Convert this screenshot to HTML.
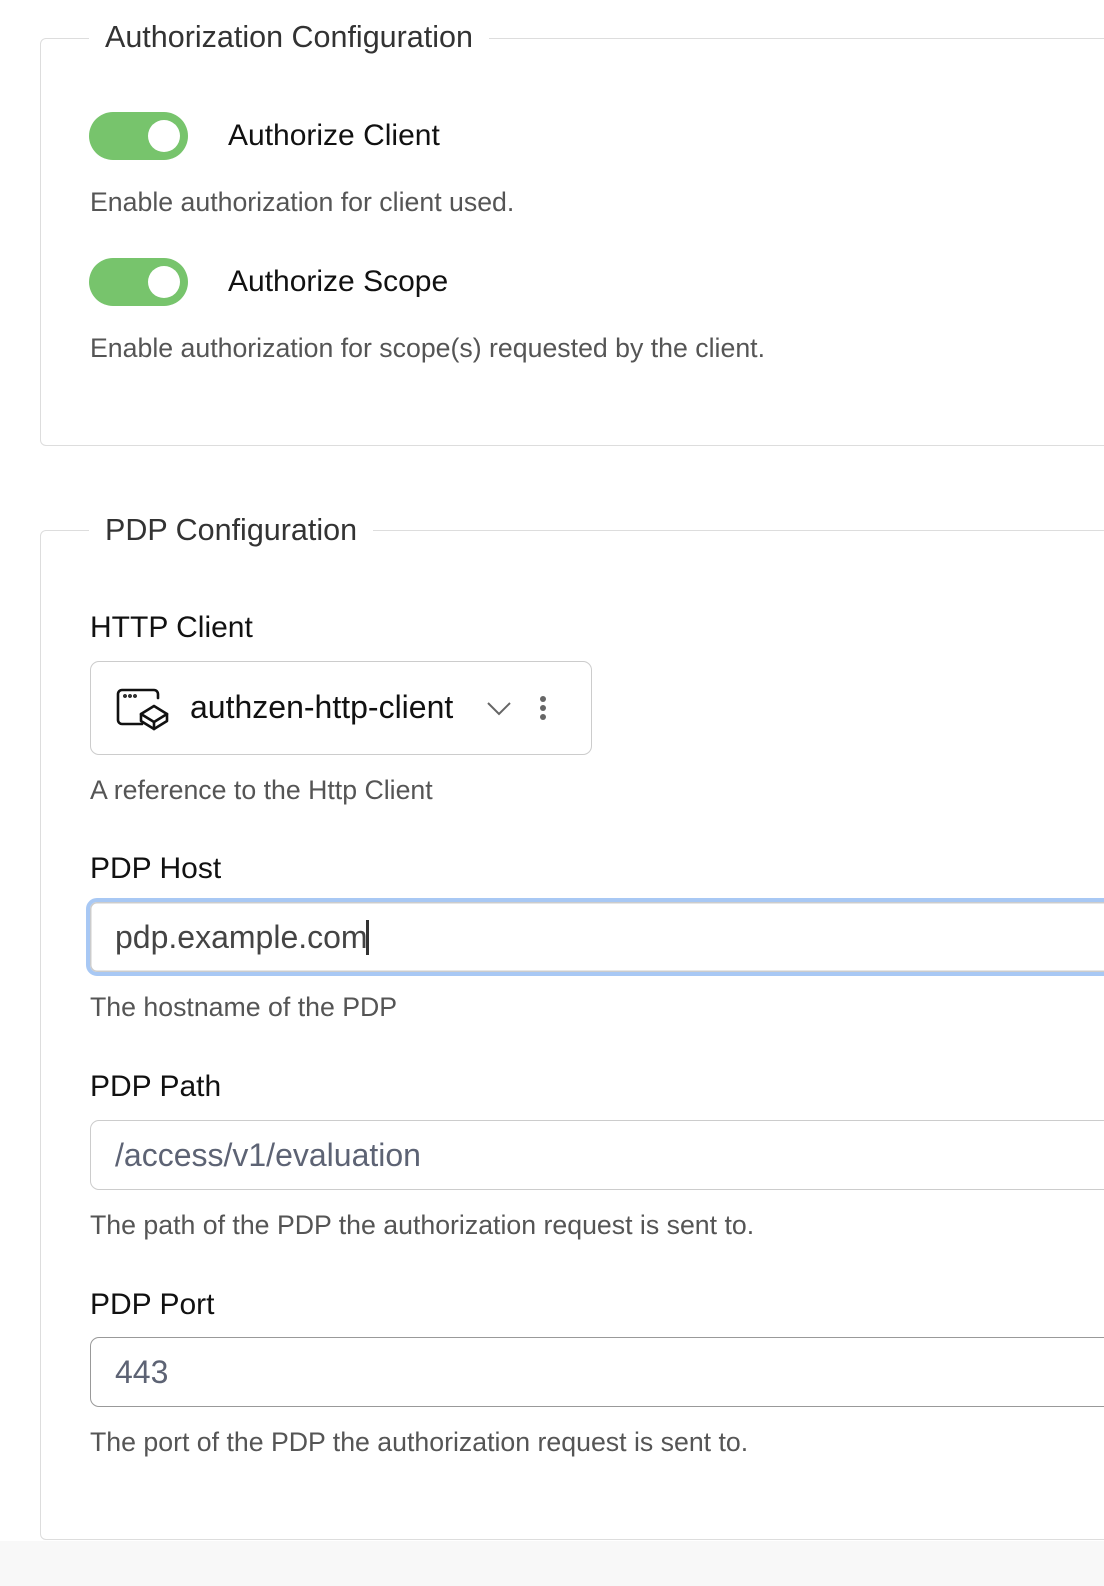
<!DOCTYPE html>
<html><head><meta charset="utf-8"><style>
body{margin:0;width:1104px;height:1586px;background:#fff;position:relative;overflow:hidden;font-family:"Liberation Sans",sans-serif;}
.t{position:absolute;white-space:nowrap;line-height:40px;}
.h{font-size:30.5px;color:#333;background:#fff;padding:0 16px;}
.l{font-size:30px;color:#111;}
.v{font-size:32px;}
.d{font-size:26.7px;color:#555;}
.fs{position:absolute;left:40px;width:1100px;border:1.5px solid #ddd;border-radius:6px;}
.tog{position:absolute;left:89px;width:99px;height:48px;border-radius:24px;background:#77c46c;}
.tog::after{content:"";position:absolute;left:59px;top:8px;width:32px;height:32px;border-radius:50%;background:#fff;}
.box{position:absolute;left:90px;width:1100px;border-radius:9px;background:#fff;box-sizing:border-box;}
</style></head><body>
<div style="position:absolute;left:0;top:1541px;width:1104px;height:45px;background:#f8f8f8"></div>
<div class="fs" style="top:38px;height:406px"></div>
<div class="t h" style="left:89px;top:17px">Authorization Configuration</div>
<div class="tog" style="top:112px"></div>
<div class="t l" style="left:228px;top:116px">Authorize Client</div>
<div class="t d" style="left:90px;top:182px">Enable authorization for client used.</div>
<div class="tog" style="top:258px"></div>
<div class="t l" style="left:228px;top:262px">Authorize Scope</div>
<div class="t d" style="left:90px;top:328px">Enable authorization for scope(s) requested by the client.</div>

<div class="fs" style="top:530px;height:1008px"></div>
<div class="t h" style="left:89px;top:510px">PDP Configuration</div>
<div class="t l" style="left:90px;top:608px">HTTP Client</div>
<div class="box" style="top:661px;width:502px;height:94px;border:1.5px solid #ccc"></div>
<svg style="position:absolute;left:116px;top:688px" width="56" height="44" viewBox="0 0 56 44" fill="none" stroke="#111" stroke-width="2.6" stroke-linecap="round" stroke-linejoin="round">
<path d="M26 36H6a4 4 0 0 1-4-4V6a4 4 0 0 1 4-4h32a4 4 0 0 1 4 4v4"/>
<circle cx="9" cy="8" r="0.6" fill="#111"/><circle cx="14" cy="8" r="0.6" fill="#111"/><circle cx="19" cy="8" r="0.6" fill="#111"/>
<path d="M25 26l13-8 13 8-13 8z"/><path d="M25 26v7l13 8 13-8v-7"/><path d="M38 34v7"/>
</svg>
<div class="t l v" style="left:190px;top:687px">authzen-http-client</div>
<svg style="position:absolute;left:486px;top:700px" width="26" height="16" viewBox="0 0 26 16"><path d="M2 3l11 11 11-11" fill="none" stroke="#666" stroke-width="2"/></svg>
<div style="position:absolute;left:540px;top:696px;width:6px;height:6px;border-radius:50%;background:#666"></div>
<div style="position:absolute;left:540px;top:705px;width:6px;height:6px;border-radius:50%;background:#666"></div>
<div style="position:absolute;left:540px;top:714px;width:6px;height:6px;border-radius:50%;background:#666"></div>
<div class="t d" style="left:90px;top:770px">A reference to the Http Client</div>

<div class="t l" style="left:90px;top:849px">PDP Host</div>
<div class="box" style="left:86px;top:898px;height:78px;border:4px solid #a8c8f4;box-shadow:inset 0 0 0 1.5px #ccc;border-radius:11px"></div>
<div class="t l v" style="left:115px;top:917px;color:#444">pdp.example.com</div>
<div style="position:absolute;left:366px;top:920px;width:3px;height:35px;background:#333"></div>
<div class="t d" style="left:90px;top:987px">The hostname of the PDP</div>

<div class="t l" style="left:90px;top:1067px">PDP Path</div>
<div class="box" style="top:1120px;height:70px;border:1.5px solid #ccc"></div>
<div class="t l v" style="left:115px;top:1135px;color:#5d6374">/access/v1/evaluation</div>
<div class="t d" style="left:90px;top:1205px">The path of the PDP the authorization request is sent to.</div>

<div class="t l" style="left:90px;top:1285px">PDP Port</div>
<div class="box" style="top:1337px;height:70px;border:1.5px solid #999"></div>
<div class="t l v" style="left:115px;top:1352px;color:#5d6374">443</div>
<div class="t d" style="left:90px;top:1422px">The port of the PDP the authorization request is sent to.</div>
</body></html>
